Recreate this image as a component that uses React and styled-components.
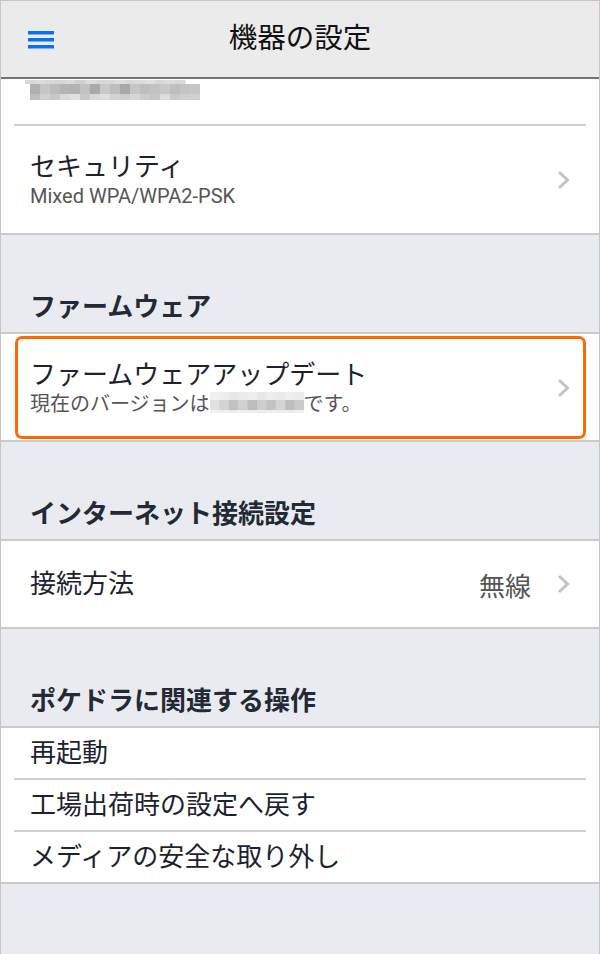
import styled, { createGlobalStyle } from "styled-components";

const GlobalStyle = createGlobalStyle`
  html, body {
    margin: 0;
    padding: 0;
    background: #e9ebf0;
  }
  body {
    font-family: Roboto, "Noto Sans CJK JP", "Noto Sans", sans-serif;
    color: #1f2631;
  }
  * { box-sizing: border-box; }
`;

const Page = styled.div`
  width: 600px;
  min-height: 954px;
  background: #e9ebf0;
  border: 1px solid #c9c5c5;
  border-bottom: none;
`;

const Header = styled.header`
  height: 78px;
  background: #ebebeb;
  border-bottom: 2px solid #727272;
  display: grid;
  grid-template-columns: 1fr auto 1fr;
  align-items: center;
`;

const MenuButton = styled.div`
  padding-left: 27px;
  padding-top: 1px;
  display: flex;
`;

const Title = styled.h1`
  margin: 0;
  font-size: 28.5px;
  font-weight: 400;
  color: #111;
  line-height: 1.2;
`;

const Group = styled.div`
  background: #fff;
  border-top: ${(p) => (p.$noTop ? "none" : "2px solid #cbcbcb")};
  border-bottom: 2px solid #cbcbcb;
`;

const Row = styled.div`
  height: ${(p) => p.$h}px;
  display: flex;
  align-items: center;
  padding: 0 29px 0 29px;
  gap: 12px;
`;

const TopRow = styled.div`
  height: 45px;
  padding: 1px 0 0 24px;
`;

const HighlightRow = styled.div`
  height: 106px;
  padding: 2px 13px 1px 14px;
  display: flex;
`;

const Highlight = styled.div`
  flex: 1;
  border: 3px solid #ff6a00;
  border-radius: 7px;
  display: flex;
  align-items: center;
  padding: 0 13px 0 12px;
  gap: 12px;
`;

const Separator = styled.div`
  height: 2px;
  margin: 0 13px;
  background: #cfcfcf;
`;

const TextBlock = styled.div`
  flex: 1;
  display: flex;
  flex-direction: column;
`;

const RowTitle = styled.div`
  font-size: 26px;
  line-height: 32px;
  color: #1c232e;
  white-space: nowrap;
`;

const RowSub = styled.div`
  font-size: 20px;
  line-height: 26px;
  color: #555;
  white-space: nowrap;
  display: flex;
  align-items: center;
`;

const Value = styled.span`
  font-size: 26px;
  color: #555;
  margin-right: 14px;
`;

const SectionHeading = styled.h2`
  margin: 0;
  height: ${(p) => p.$h}px;
  display: flex;
  align-items: flex-end;
  padding: 0 29px 9px;
  font-size: 26px;
  font-weight: 700;
  line-height: 32px;
  color: #232a35;
`;

const Hamburger = () => (
  <svg width="26" height="18" viewBox="0 0 26 18">
    <rect x="0" y="0" width="26" height="3.5" fill="#0a6ff5" />
    <rect x="0" y="7" width="26" height="3.5" fill="#0a6ff5" />
    <rect x="0" y="14" width="26" height="3.5" fill="#0a6ff5" />
  </svg>
);

const Chevron = () => (
  <svg width="13" height="20" viewBox="0 0 13 20" style={{ flexShrink: 0 }}>
    <polyline
      points="2,2 10.5,10 2,18"
      fill="none"
      stroke="#c4c4c4"
      strokeWidth="3"
    />
  </svg>
);

// mosaic used for masked values
const Mosaic = ({ rows, cell, offset = 0 }) => {
  const width = Math.max(...rows.map((r) => r.x + r.c.length * cell));
  let y = 0;
  const rects = [];
  rows.forEach((r, ri) => {
    r.c.forEach((g, ci) => {
      rects.push(
        <rect
          key={ri + "-" + ci}
          x={r.x + ci * cell}
          y={y}
          width={cell + 0.5}
          height={r.h}
          fill={`rgb(${g},${g},${g})`}
        />
      );
    });
    y += r.h;
  });
  return (
    <svg
      width={width}
      height={y}
      viewBox={`0 0 ${width} ${y}`}
      style={{ display: "block", marginTop: offset }}
    >
      {rects}
    </svg>
  );
};

const topMosaic = [
  { x: 0, h: 4, c: [216, 220, 214, 212, 218, 208, 220, 214, 216, 222, 216, 220, 224, 216, 220, 218] },
  { x: 5, h: 10, c: [176, 198, 188, 180, 178, 194, 170, 200, 190, 168, 198, 190, 194, 200, 190, 196, 198] },
  { x: 5, h: 6, c: [190, 208, 200, 218, 224, 200, 216, 222, 210, 206, 214, 204, 198, 220, 202, 206, 208] },
];

const verMosaic = [
  { x: 0, h: 8, c: [240, 236, 232, 234, 238, 232, 236, 234, 238, 236] },
  { x: 0, h: 10, c: [226, 212, 194, 208, 188, 206, 194, 212, 190, 202] },
  { x: 0, h: 3, c: [242, 238, 236, 240, 238, 236, 240, 238, 236, 240] },
];

export default function App() {
  return (
    <>
      <GlobalStyle />
      <Page>
        <Header>
          <MenuButton>
            <Hamburger />
          </MenuButton>
          <Title>機器の設定</Title>
          <div />
        </Header>

        <Group $noTop>
          <TopRow>
            <Mosaic rows={topMosaic} cell={10} />
          </TopRow>
          <Separator />
          <Row $h={107}>
            <TextBlock>
              <RowTitle>セキュリティ</RowTitle>
              <RowSub>Mixed WPA/WPA2-PSK</RowSub>
            </TextBlock>
            <Chevron />
          </Row>
        </Group>

        <SectionHeading $h={97}>ファームウェア</SectionHeading>
        <Group>
          <HighlightRow>
            <Highlight>
              <TextBlock>
                <RowTitle>ファームウェアアップデート</RowTitle>
                <RowSub>
                  現在のバージョンは
                  <Mosaic rows={verMosaic} cell={9.4} offset={-2} />
                  です。
                </RowSub>
              </TextBlock>
              <Chevron />
            </Highlight>
          </HighlightRow>
        </Group>

        <SectionHeading $h={97}>インターネット接続設定</SectionHeading>
        <Group>
          <Row $h={86}>
            <TextBlock>
              <RowTitle>接続方法</RowTitle>
            </TextBlock>
            <Value>無線</Value>
            <Chevron />
          </Row>
        </Group>

        <SectionHeading $h={97}>ポケドラに関連する操作</SectionHeading>
        <Group>
          <Row $h={50}>
            <RowTitle>再起動</RowTitle>
          </Row>
          <Separator />
          <Row $h={50}>
            <RowTitle>工場出荷時の設定へ戻す</RowTitle>
          </Row>
          <Separator />
          <Row $h={50}>
            <RowTitle>メディアの安全な取り外し</RowTitle>
          </Row>
        </Group>
      </Page>
    </>
  );
}
